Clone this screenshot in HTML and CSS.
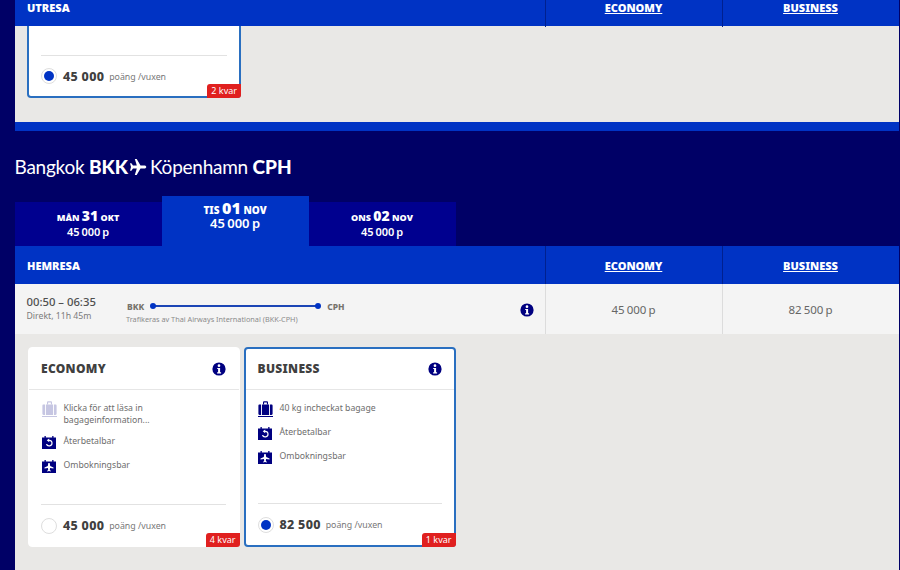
FILE: index.html
```html
<!DOCTYPE html>
<html lang="sv">
<head>
<meta charset="utf-8">
<title>Bangkok BKK – Köpenhamn CPH</title>
<link rel="stylesheet" href="styles.css">
</head>
<body>
<svg class="defs" width="0" height="0" aria-hidden="true">
  <symbol id="info" viewBox="0 0 14 14">
    <circle cx="7" cy="7" r="6.6" fill="#000080"/>
    <circle cx="7" cy="3.7" r="1.35" fill="#fff"/>
    <path d="M5.2 5.9h2.9v4.3h1v1.2H5.1v-1.2h1V7.1h-.9z" fill="#fff"/>
  </symbol>
  <symbol id="bag" viewBox="0 0 15 16">
    <path d="M5 3.500V1.200C5 .6 5.400.3 6 .3h3c.6 0 1 .3 1 .9v2.300H8.900V1.400H6.100v2.100z" fill="currentColor"/>
    <path d="M.4 4.700C.4 4 .8 3.500 1.500 3.500H3V14H1.500C.8 14 .4 13.500.4 12.800zM3.900 3.500h7.200V14H3.900zM12 3.500h1.500c.7 0 1.100.5 1.100 1.200v8.100c0 .7-.4 1.200-1.100 1.200H12z" fill="currentColor"/>
    <path d="M0 15h15v1H0z" fill="currentColor"/>
  </symbol>
  <symbol id="refund" viewBox="0 0 14 13">
    <path d="M0 1.500h2.500V0h1.300v1.500h6.400V0h1.300v1.500H14V13H0z" fill="#000080"/>
    <path d="M7.200 3.700a3.400 3.400 0 1 1-3.300 4.200h1.300a2.200 2.200 0 1 0 2-3V6.300L4.700 4.300 7.200 2.400z" fill="#fff"/>
  </symbol>
  <symbol id="rebook" viewBox="0 0 14 13">
    <path d="M0 1.500h2.500V0h1.300v1.500h6.400V0h1.300v1.500H14V13H0z" fill="#000080"/>
    <path d="M6.300 3h1.400l.5 2.900 3.300 1.500v1.100L8.100 7.900l-.3 2 1 .8v.7L7 11l-1.800.4v-.7l1-.8-.3-2-3.400.6V7.400l3.300-1.500z" fill="#fff"/>
  </symbol>
  <symbol id="plane" viewBox="0 0 18 18">
    <path d="M17.300 9c0-.9-.9-1.500-2-1.500h-3.800L7.700 1H5.800l2 6.500H4L2.400 5.300H1L2 9 1 12.700h1.400L4 10.500h3.800l-2 6.500h1.900l3.800-6.500h3.800c1.100 0 2-.6 2-1.500z" fill="currentColor"/>
  </symbol>
</svg>

<main class="page">
  <section class="panel">
    <header class="bar bar-top">
      <div class="bar-label">UTRESA</div>
      <a class="bar-cabin">ECONOMY</a>
      <a class="bar-cabin">BUSINESS</a>
    </header>
    <div class="fares fares-top">
      <article class="card card-selected card-clipped">
        <div class="card-foot">
          <span class="radio radio-on"></span>
          <strong class="points">45 000</strong>
          <span class="unit">poäng /vuxen</span>
        </div>
        <span class="badge">2 kvar</span>
      </article>
    </div>
    <div class="strip"></div>
  </section>

  <h1 class="route">Bangkok <b>BKK</b><svg class="route-plane"><use href="#plane"/></svg>Köpenhamn <b>CPH</b></h1>

  <nav class="tabs">
    <a class="tab"><span class="tab-date">MÅN <b>31</b> OKT</span><span class="tab-price">45 000 p</span></a>
    <a class="tab tab-active"><span class="tab-date">TIS <b>01</b> NOV</span><span class="tab-price">45 000 p</span></a>
    <a class="tab"><span class="tab-date">ONS <b>02</b> NOV</span><span class="tab-price">45 000 p</span></a>
  </nav>

  <section class="panel">
    <header class="bar">
      <div class="bar-label">HEMRESA</div>
      <a class="bar-cabin">ECONOMY</a>
      <a class="bar-cabin">BUSINESS</a>
    </header>
    <div class="flight">
      <div class="flight-info">
        <div class="times">
          <div class="time">00:50 – 06:35</div>
          <div class="duration">Direkt, 11h 45m</div>
        </div>
        <div class="path">
          <div class="path-line"><span class="iata">BKK</span><span class="line"></span><span class="iata">CPH</span></div>
          <div class="carrier">Trafikeras av Thai Airways International (BKK-CPH)</div>
        </div>
        <svg class="icon-info flight-i"><use href="#info"/></svg>
      </div>
      <div class="flight-price">45 000 p</div>
      <div class="flight-price">82 500 p</div>
    </div>
    <div class="fares">
      <article class="card">
        <div class="card-head"><h2>ECONOMY</h2><svg class="icon-info"><use href="#info"/></svg></div>
        <ul class="perks">
          <li><svg class="ico-bag ico-faded"><use href="#bag"/></svg><span>Klicka för att läsa in<br>bagageinformation...</span></li>
          <li><svg class="ico-cal"><use href="#refund"/></svg><span>Återbetalbar</span></li>
          <li><svg class="ico-cal"><use href="#rebook"/></svg><span>Ombokningsbar</span></li>
        </ul>
        <div class="card-foot">
          <span class="radio"></span>
          <strong class="points">45 000</strong>
          <span class="unit">poäng /vuxen</span>
        </div>
        <span class="badge">4 kvar</span>
      </article>
      <article class="card card-selected">
        <div class="card-head"><h2>BUSINESS</h2><svg class="icon-info"><use href="#info"/></svg></div>
        <ul class="perks">
          <li><svg class="ico-bag"><use href="#bag"/></svg><span>40 kg incheckat bagage</span></li>
          <li><svg class="ico-cal"><use href="#refund"/></svg><span>Återbetalbar</span></li>
          <li><svg class="ico-cal"><use href="#rebook"/></svg><span>Ombokningsbar</span></li>
        </ul>
        <div class="card-foot">
          <span class="radio radio-on"></span>
          <strong class="points">82 500</strong>
          <span class="unit">poäng /vuxen</span>
        </div>
        <span class="badge">1 kvar</span>
      </article>
    </div>
  </section>
</main>
</body>
</html>
```

FILE: styles.css
```css
* { box-sizing: border-box; }
html, body { margin: 0; height: 570px; overflow: hidden; }
body {
  background: #000066;
  font-family: "Noto Sans", "Open Sans", sans-serif;
  color: #4a4a4a;
}
.defs { position: absolute; }
.page { width: 900px; padding: 0 1.500px 0 14.500px; }

.bar {
  display: grid;
  grid-template-columns: 530px 177px 177px;
  height: 38px;
  background: #0033c4;
  color: #fff;
  font-weight: 900;
  font-size: 11px;
  align-items: stretch;
}
.bar-top { height: 26px; }
.bar-label { padding: 0 0 0 12.500px; display: flex; align-items: center; }
.bar-top .bar-label, .bar-top .bar-cabin { padding-bottom: 12px; }
.bar-cabin {
  display: flex;
  align-items: center;
  justify-content: center;
  text-decoration: underline;
  border-left: 1px solid #00208f;
}

.fares {
  display: flex;
  gap: 4px;
  align-items: flex-start;
  background: #e9e8e6;
  padding: 13px 13px 0;
  height: 240px;
}
.fares-top { height: 96px; padding: 0 0 0 12.500px; }
.strip { height: 9px; background: #0033c4; }

.route {
  display: flex;
  align-items: center;
  height: 65px;
  padding-top: 6px;
  margin: 0;
  color: #fff;
  font-family: "Lato", "Noto Sans", sans-serif;
  font-size: 19px;
  font-weight: 400;
  letter-spacing: -.25px;
  white-space: pre;
}
.route b { font-weight: 900; font-size: 19px; letter-spacing: 0; }
.route-plane { width: 18px; height: 18px; margin: 1px 3px 0 1px; color: #fff; }

.tabs { display: flex; align-items: flex-end; height: 50px; }
.tab {
  width: 147px;
  height: 44px;
  background: #00008f;
  color: #fff;
  display: flex;
  flex-direction: column;
  align-items: center;
  justify-content: center;
  padding-bottom: 3px;
}
.tab-date { font-size: 9px; font-weight: 900; line-height: 15px; }
.tab-date b { font-size: 14px; }
.tab-price { font-size: 11px; font-weight: 600; line-height: 13px; word-spacing: -1px; }
.tab-active { height: 50px; background: #0033c4; padding-bottom: 11px; }
.tab-active .tab-date { font-size: 10px; line-height: 14px; }
.tab-active .tab-date b { font-size: 16px; }
.tab-active .tab-price { font-size: 13px; line-height: 13px; }

.flight {
  display: grid;
  grid-template-columns: 530px 177px 177px;
  height: 50px;
  background: #f4f4f4;
}
.flight-info { display: flex; align-items: center; padding: 0 11px 0 12px; }
.times { width: 100.500px; padding-bottom: 2px; }
.time { font-size: 11.300px; font-weight: 500; line-height: 15px; color: #4f4f4f; }
.duration { font-size: 8.700px; line-height: 13px; margin-top: 1px; color: #7b7b7b; }
.path { width: 220px; padding-top: 6px; }
.path-line { display: flex; align-items: center; gap: 4px; height: 14px; }
.iata { font-size: 8.500px; font-weight: 800; color: #77736c; }
.line {
  position: relative;
  width: 167px;
  height: 2px;
  background: #1b45b5;
  margin: 0 4px;
}
.line::before, .line::after {
  content: "";
  position: absolute;
  top: -2px;
  width: 6px;
  height: 6px;
  border-radius: 50%;
  background: #0033c4;
}
.line::before { left: -2px; }
.line::after { right: -2px; }
.carrier { font-size: 7.300px; line-height: 12px; color: #8b8b8b; white-space: nowrap; margin-left: -1px; }
.flight-i { margin-left: auto; margin-top: 2px; }
.icon-info { width: 14px; height: 14px; flex: none; }
.flight-price {
  display: flex;
  align-items: center;
  justify-content: center;
  font-size: 11.500px;
  color: #666;
  border-left: 1px solid #dcdcdc;
  word-spacing: -1px;
}

.card {
  position: relative;
  width: 212px;
  height: 200px;
  background: #fff;
  border-radius: 4px;
  border: 1px solid #fff;
  display: flex;
  flex-direction: column;
}
.card-selected { border: 2px solid #2a6fc0; }
.card-clipped { width: 214px; height: 72px; border-top: 0; border-radius: 0 0 4px 4px; }
.card-head {
  height: 42px;
  display: flex;
  align-items: center;
  justify-content: space-between;
  padding: 0 13px 0 12.500px;
  border-bottom: 1px solid #e6e6e6;
  flex: none;
}
.card-selected .card-head { padding: 0 12px; height: 41px; }
.card-selected .card-head h2 { margin-bottom: 1px; }
.card-head h2 { margin: 0; font-size: 12px; font-weight: 900; color: #404040; letter-spacing: .3px; }
.perks { list-style: none; margin: 0; padding: 11px 13px 0 13px; flex: 1; }
.card-selected .perks { padding: 11px 12px 0; }
.perks li {
  display: flex;
  align-items: flex-start;
  gap: 7px;
  font-size: 8.700px;
  line-height: 12px;
  color: #6d6d6d;
  margin-bottom: 8px;
  min-height: 16px;
}
.perks span { padding-top: 1px; }
.ico-bag { width: 15px; height: 16px; color: #000080; flex: none; }
.ico-faded { opacity: .22; }
.ico-cal { width: 14px; height: 13px; flex: none; margin: 2px 1px 0 0; }
.card-foot {
  margin: 0 13px 0 12.500px;
  height: 42px;
  flex: none;
  border-top: 1px solid #e2e2e2;
  display: flex;
  align-items: center;
}
.card-selected .card-foot { margin: 0 12px; }
.card-selected.card-clipped .card-foot { margin: 29px 12px 0; height: 41px; }
.radio {
  width: 16px;
  height: 16px;
  border-radius: 50%;
  border: 1px solid #dedede;
  background: #fff;
  margin-right: 6px;
  flex: none;
  position: relative;
}
.radio-on::after {
  content: "";
  position: absolute;
  inset: 2px;
  border-radius: 50%;
  background: #0033c4;
}
.points { font-size: 12.500px; font-weight: 800; color: #404040; letter-spacing: .3px; margin-right: 5px; }
.unit { font-size: 8.800px; color: #777; padding-top: 1px; }
.badge {
  position: absolute;
  right: -1px;
  bottom: -1px;
  height: 14px;
  padding: 0 4px;
  font-size: 9px;
  line-height: 14px;
  color: #fff;
  background: #e0201f;
  border-radius: 3px 0 3px 0;
}
.card-selected .badge { right: -2px; bottom: -2px; }
```
